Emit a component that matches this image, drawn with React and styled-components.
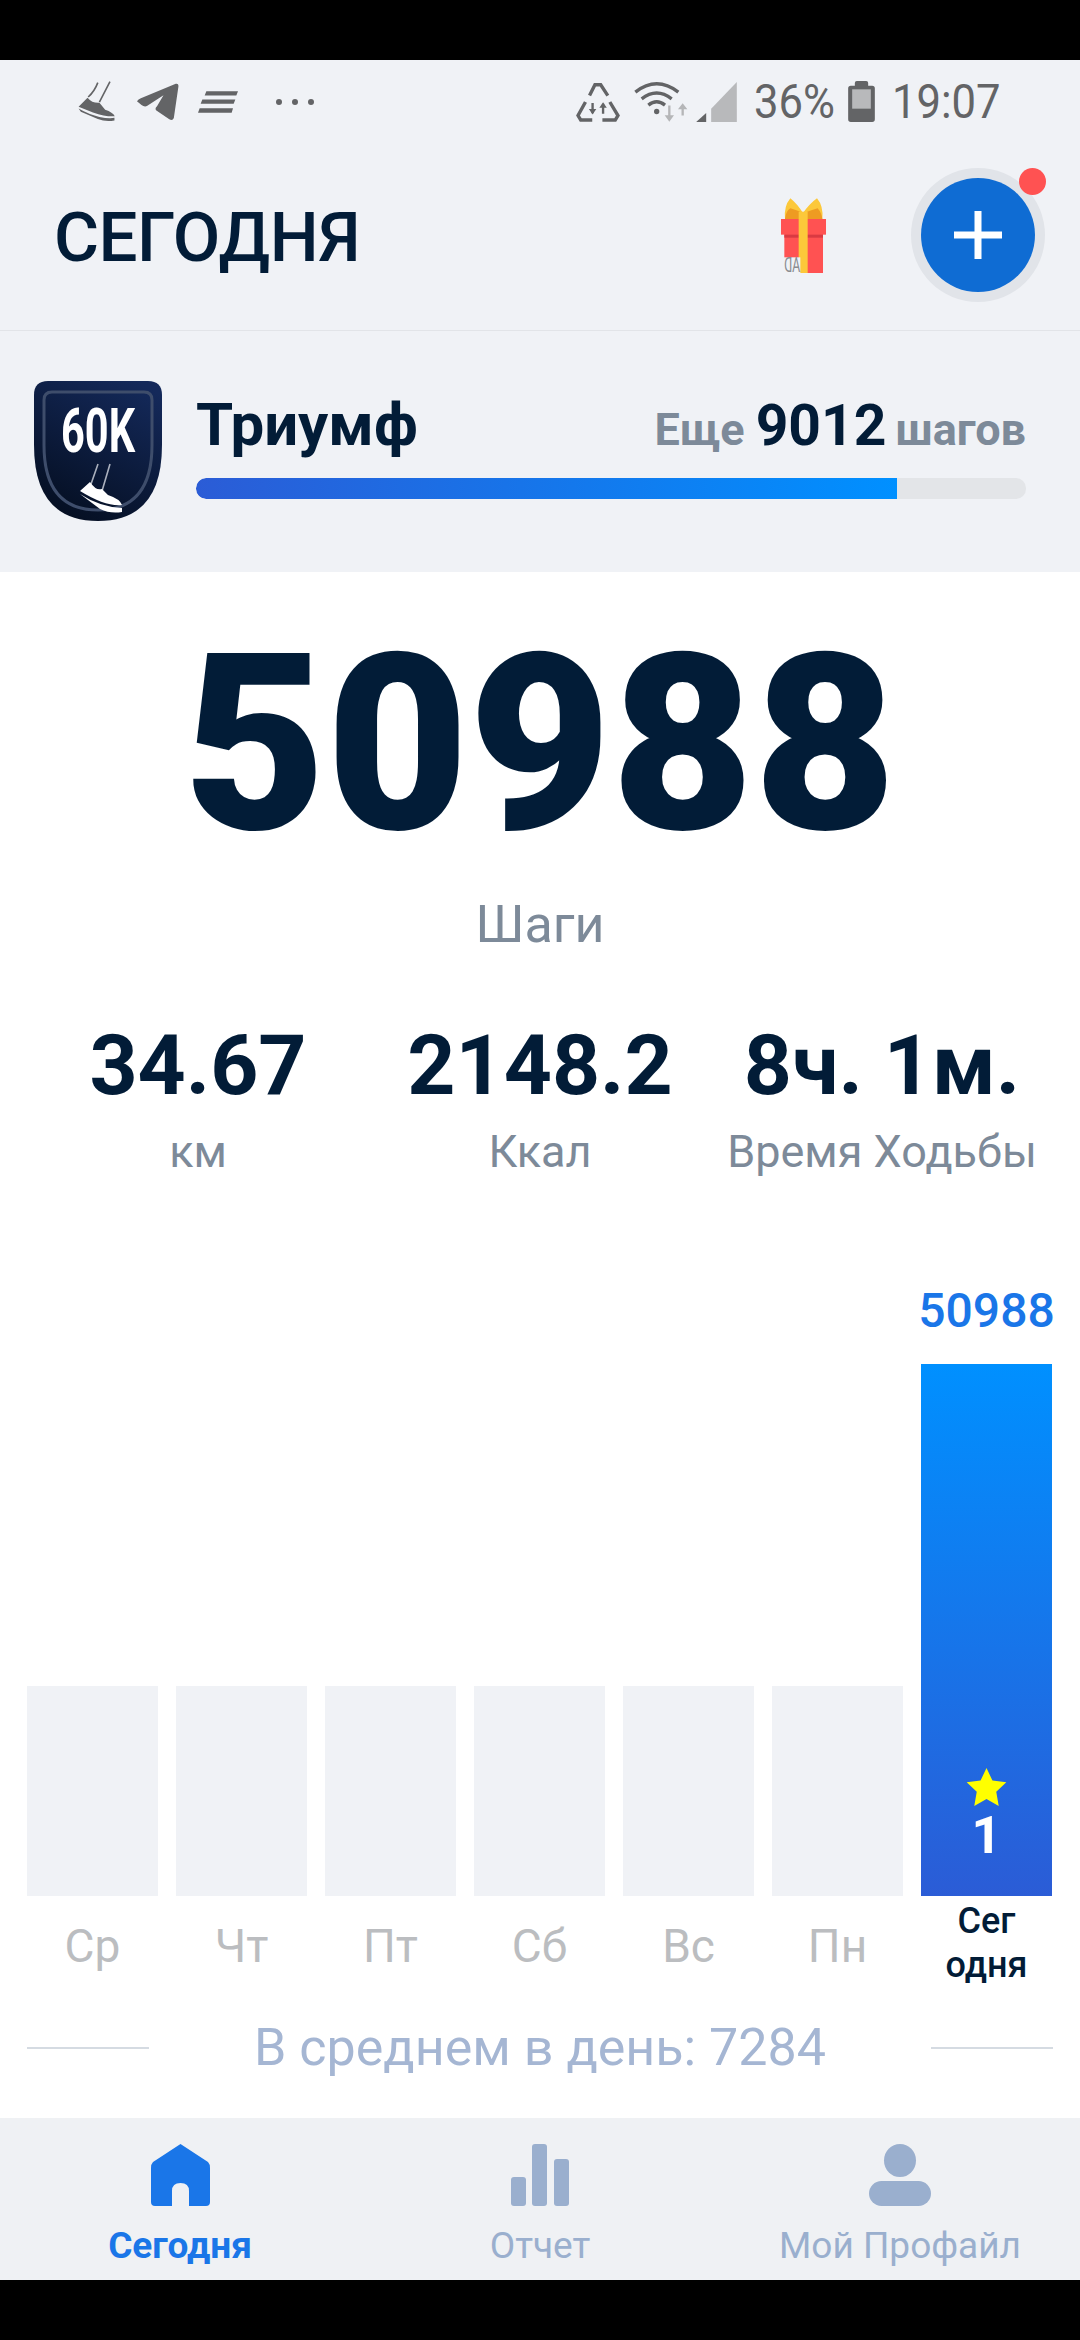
import React from "react";
import styled, { createGlobalStyle } from "styled-components";

const GlobalStyle = createGlobalStyle`
  html, body {
    margin: 0;
    padding: 0;
    background: #000;
    font-family: Roboto, "Noto Sans", sans-serif;
  }
`;

const dark = "#021c37";
const panel = "#f0f2f6";
const statusGrey = "#636466";

const Screen = styled.div`
  width: 1080px;
  height: 2340px;
  display: flex;
  flex-direction: column;
  background: #000;
  overflow: hidden;
`;

const BlackBar = styled.div`
  height: 60px;
  flex: none;
  background: #000;
`;

const StatusBar = styled.div`
  height: 80px;
  flex: none;
  display: flex;
  align-items: center;
  justify-content: space-between;
  padding: 3px 82px 0 78px;
  box-sizing: border-box;
  background: ${panel};
  color: ${statusGrey};
`;

const StatusGroup = styled.div`
  display: flex;
  align-items: center;
`;

const StatusIcon = styled.svg`
  display: block;
  flex: none;
  margin-left: ${(p) => p.$ml || 0}px;
`;

// the status bar font is narrower than Roboto, so it gets squeezed a bit
const StatusText = styled.span`
  display: block;
  width: ${(p) => p.$width}px;
  margin-left: ${(p) => p.$ml || 0}px;
  font-size: 49px;
  line-height: 60px;
  white-space: nowrap;
  transform: scaleX(0.89);
  transform-origin: left center;
`;

const Header = styled.header`
  height: 191px;
  flex: none;
  box-sizing: border-box;
  display: flex;
  align-items: center;
  padding: 0 35px 0 54px;
  background: ${panel};
  border-bottom: 1px solid #e2e4e8;
`;

const Title = styled.h1`
  flex: 1;
  margin: 6px 0 0;
  font-size: 69px;
  font-weight: 500;
  line-height: 80px;
  color: ${dark};
  letter-spacing: -0.5px;
`;

const GiftIcon = styled.svg`
  display: block;
  margin: 0 85px -5px 0;
`;

const AddRing = styled.div`
  position: relative;
  width: 134px;
  height: 134px;
  display: flex;
  align-items: center;
  justify-content: center;
  border-radius: 50%;
  background: #e1e4e9;
`;

const AddButton = styled.button`
  width: 114px;
  height: 114px;
  padding: 0;
  display: flex;
  align-items: center;
  justify-content: center;
  border: 0;
  border-radius: 50%;
  background: #0f6cd3;
`;

const RedDot = styled.span`
  position: absolute;
  top: 0;
  right: -1px;
  width: 27px;
  height: 27px;
  border-radius: 50%;
  background: #ff5252;
`;

const Goal = styled.section`
  height: 241px;
  flex: none;
  box-sizing: border-box;
  display: flex;
  padding: 50px 54px 0 34px;
  background: ${panel};
`;

const Badge = styled.svg`
  display: block;
  flex: none;
  margin-right: 34px;
`;

const GoalBody = styled.div`
  flex: 1;
`;

const GoalRow = styled.div`
  display: flex;
  align-items: baseline;
  justify-content: space-between;
  height: 70px;
  padding-top: 9px;
`;

const GoalName = styled.span`
  font-size: 60px;
  font-weight: 700;
  line-height: 70px;
  color: ${dark};
`;

const GoalNote = styled.span`
  font-size: 45px;
  font-weight: 700;
  color: #7d8a99;
`;

const GoalCount = styled.b`
  font-size: 57px;
  font-weight: 700;
  color: ${dark};
  margin: 0 9px 0 11px;
`;

const Track = styled.div`
  height: 21px;
  margin-top: 18px;
  border-radius: 10px;
  background: #e3e5e8;
  overflow: hidden;
`;

const Fill = styled.div`
  height: 100%;
  border-radius: 10px 0 0 10px;
  background: linear-gradient(90deg, #2b5cd6 0%, #0090ff 100%);
`;

const Main = styled.main`
  flex: 1;
  display: flex;
  flex-direction: column;
  background: #fff;
`;

const Steps = styled.div`
  margin-top: 48px;
  font-size: 246px;
  font-weight: 900;
  line-height: 250px;
  text-align: center;
  color: ${dark};
`;

const StepsLabel = styled.div`
  margin-top: 25px;
  font-size: 52px;
  line-height: 60px;
  text-align: center;
  color: #7d8a99;
`;

const Stats = styled.div`
  display: grid;
  grid-template-columns: repeat(3, 342px);
  justify-content: center;
  margin-top: 66px;
`;

const Stat = styled.div`
  text-align: center;
  white-space: nowrap;
`;

const StatValue = styled.div`
  font-size: 84px;
  font-weight: 700;
  line-height: 90px;
  color: ${dark};
`;

const StatLabel = styled.div`
  margin-top: 13px;
  font-size: 45px;
  line-height: 56px;
  color: #7d8a99;
`;

const Chart = styled.div`
  display: grid;
  grid-template-columns: repeat(7, 131px);
  column-gap: 18px;
  margin-top: 106px;
  padding-left: 27px;
`;

const Column = styled.div`
  display: flex;
  flex-direction: column;
`;

const BarSlot = styled.div`
  height: 610px;
  display: flex;
  flex-direction: column;
  justify-content: flex-end;
  align-items: stretch;
`;

const BarValue = styled.div`
  height: 50px;
  margin: 0 -4px 28px;
  font-size: 48px;
  font-weight: 500;
  line-height: 50px;
  text-align: center;
  color: #1a76e8;
`;

const Bar = styled.div`
  height: ${(p) => p.$height}px;
  display: flex;
  flex-direction: column;
  align-items: center;
  justify-content: flex-end;
  padding-bottom: ${(p) => (p.$active ? 36 : 0)}px;
  box-sizing: border-box;
  background: ${(p) =>
    p.$active ? "linear-gradient(180deg, #0090ff 0%, #2b5cd6 100%)" : panel};
`;

const Rank = styled.span`
  margin-top: 6px;
  font-size: 52px;
  font-weight: 700;
  line-height: 48px;
  color: #fff;
`;

const DayLabel = styled.div`
  height: 95px;
  box-sizing: border-box;
  padding-top: ${(p) => (p.$active ? 3 : 27)}px;
  font-size: ${(p) => (p.$active ? 36 : 46)}px;
  font-weight: ${(p) => (p.$active ? 500 : 400)};
  line-height: ${(p) => (p.$active ? 44 : 46)}px;
  text-align: center;
  color: ${(p) => (p.$active ? dark : "#bbbdc0")};
`;

const Average = styled.div`
  display: flex;
  align-items: center;
  justify-content: space-between;
  margin-top: 27px;
  padding: 0 27px;
`;

const AverageRule = styled.span`
  width: 122px;
  height: 2px;
  background: #d5dbe2;
`;

const AverageText = styled.span`
  font-size: 52px;
  line-height: 60px;
  color: #a5b6d3;
`;

const TabBar = styled.nav`
  height: 162px;
  flex: none;
  display: grid;
  grid-template-columns: repeat(3, 360px);
  background: #eff1f4;
`;

const Tab = styled.div`
  display: flex;
  flex-direction: column;
  align-items: center;
  padding-top: 26px;
  color: ${(p) => (p.$active ? "#1a76e8" : "#9aafce")};
`;

const TabLabel = styled.span`
  margin-top: 18px;
  font-size: 37px;
  font-weight: ${(p) => (p.$active ? 700 : 400)};
  line-height: 44px;
  white-space: nowrap;
`;

const ShoeStatus = () => (
  <StatusIcon width="38" height="41" viewBox="85 60 115 128">
    <path d="M145 65 Q135 92 115 110 M183 62 L150 126" stroke={statusGrey} strokeWidth="5" fill="none" />
    <path d="M85 140 L113 112 Q128 130 150 128 L168 150 Q192 158 198 170 Q170 172 130 158 Z" fill={statusGrey} />
    <path d="M85 146 Q120 166 150 172 Q178 178 197 175 L197 183 Q170 188 145 179 L92 156 Z" fill={statusGrey} />
  </StatusIcon>
);

const PlaneStatus = () => (
  <StatusIcon $ml={20} width="43" height="38" viewBox="255 70 133 117">
    <path
      d="M258 126 Q262 120 270 117 L378 72 Q388 70 386 82 L372 178 Q368 188 358 182 L318 155 Q312 148 320 142 L340 108 L290 140 Q282 145 272 138 Z"
      fill={statusGrey}
    />
  </StatusIcon>
);

const LinesStatus = () => (
  <StatusIcon $ml={19} width="40" height="22" viewBox="445 90 120 65">
    <path
      d="M470 90 H565 L560 103 H465 Z M458 115 H557 L552 128 H453 Z M450 141 H550 L546 155 H445 Z"
      fill={statusGrey}
    />
  </StatusIcon>
);

const DotsStatus = () => (
  <StatusIcon $ml={38} width="38" height="8" viewBox="0 0 38 8">
    <circle cx="3" cy="4" r="3" fill={statusGrey} />
    <circle cx="19" cy="4" r="3" fill={statusGrey} />
    <circle cx="35" cy="4" r="3" fill={statusGrey} />
  </StatusIcon>
);

const RecycleStatus = () => (
  <StatusIcon width="44" height="40" viewBox="52 66 130 118">
    <g fill="none" stroke={statusGrey} strokeWidth="10">
      <path d="M92 106 L108 74 H125 L146 106" />
      <path d="M80 125 L58 165 L66 178 H100" />
      <path d="M152 125 L176 165 L168 178 H130" />
      <path d="M101 128 V158 M132 160 V130" strokeWidth="7" />
    </g>
    <path d="M90 146 H112 L101 162 Z M121 142 H143 L132 126 Z" fill={statusGrey} />
  </StatusIcon>
);

const WifiStatus = () => (
  <StatusIcon $ml={14} width="55" height="42" viewBox="222 62 165 125">
    <g fill="none" stroke={statusGrey} strokeWidth="10">
      <path d="M226 95 Q290 45 355 95" />
      <path d="M245 115 Q290 80 335 115" />
      <path d="M265 134 Q290 114 315 134" />
    </g>
    <circle cx="290" cy="153" r="8" fill={statusGrey} />
    <path d="M328 135 V170 M368 165 V135" stroke="#b5b6b8" strokeWidth="7" fill="none" />
    <path d="M314 164 H342 L328 184 Z M354 146 H382 L368 128 Z" fill="#b5b6b8" />
  </StatusIcon>
);

const SignalStatus = () => (
  <StatusIcon $ml={7} width="41" height="40" viewBox="405 65 122 120">
    <path d="M405 185 L435 158 V185 Z" fill={statusGrey} />
    <path d="M450 185 V145 L527 65 V185 Z" fill="#b8b9bb" />
  </StatusIcon>
);

const BatteryStatus = () => (
  <StatusIcon $ml={16} width="27" height="41" viewBox="862 62 80 123">
    <path
      d="M882 76 V68 Q882 62 888 62 H916 Q922 62 922 68 V76 H934 Q942 76 942 84 V177 Q942 185 934 185 H870 Q862 185 862 177 V84 Q862 76 870 76 Z"
      fill={statusGrey}
    />
    <rect x="874" y="87" width="56" height="58" fill="#b8b9bb" />
  </StatusIcon>
);

const Gift = () => (
  <GiftIcon width="45" height="80" viewBox="60 105 135 240">
    <path d="M72 168 Q68 130 88 106 Q108 122 126 150 Q146 122 168 106 Q188 130 184 168 Z" fill="#fcc83a" />
    <path d="M72 168 Q74 145 88 136 Q108 142 128 150 Q150 142 170 136 Q182 150 184 168 Z" fill="#ee9b22" />
    <rect x="70" y="212" width="116" height="118" fill="#ff5252" />
    <rect x="60" y="168" width="135" height="47" fill="#ff5252" />
    <rect x="70" y="215" width="116" height="9" fill="#d93a42" />
    <rect x="113" y="146" width="27" height="184" fill="#fcc83a" />
    <rect x="64" y="283" width="54" height="47" fill="#f0f2f6" />
    <text
      transform="translate(118 328) scale(-0.62 1)"
      fontSize="60"
      fontFamily="Roboto, sans-serif"
      fill="#8a8c90"
    >
      AD
    </text>
  </GiftIcon>
);

const BadgeIcon = () => (
  <Badge width="128" height="140" viewBox="0 0 128 140">
    <defs>
      <linearGradient id="badgeBg" x1="0.8" y1="0" x2="0.3" y2="1">
        <stop offset="0" stopColor="#14295a" />
        <stop offset="1" stopColor="#050f22" />
      </linearGradient>
    </defs>
    <path d="M14 0 H114 Q128 0 128 14 V64 Q128 140 64 140 Q0 140 0 64 V14 Q0 0 14 0 Z" fill="url(#badgeBg)" />
    <path
      d="M18 11 H110 Q118 11 118 19 V64 Q118 129 64 129 Q10 129 10 64 V19 Q10 11 18 11 Z"
      fill="none"
      stroke="#3e4d6b"
      strokeWidth="3"
    />
    <text
      transform="translate(27 71) scale(0.67 1)"
      fontFamily="Roboto, sans-serif"
      fontWeight="700"
      fontSize="62"
      fill="#fff"
    >
      60K
    </text>
    <path d="M64 83 L56 106 M76 83 L68 110" stroke="#aab0bd" strokeWidth="1.6" fill="none" />
    <path d="M46 110 L56 101 Q62 110 68 108 L74 114 Q86 118 88 124 Q72 126 46 110 Z" fill="#fff" />
    <path d="M46 113 Q66 126 88 127 L88 131 Q76 133 66 128 Z" fill="#fff" />
  </Badge>
);

const Star = () => (
  <svg width="41" height="38" viewBox="0 0 24 23" style={{ display: "block" }}>
    <path d="M12 0 L15.6 7.6 L24 8.7 L17.9 14.4 L19.4 23 L12 18.8 L4.6 23 L6.1 14.4 L0 8.7 L8.4 7.6 Z" fill="#ffff00" />
  </svg>
);

const HomeIcon = () => (
  <svg width="59" height="62" viewBox="0 0 59 62" fill="currentColor" style={{ display: "block" }}>
    <path d="M29.5 0 L57 18 Q59 20 59 24 V58 Q59 62 55 62 H38 V47 Q38 39 29.5 39 Q21 39 21 47 V62 H4 Q0 62 0 58 V24 Q0 20 2 18 Z" />
  </svg>
);

const ReportIcon = () => (
  <svg width="58" height="62" viewBox="0 0 58 62" fill="currentColor" style={{ display: "block" }}>
    <rect x="0" y="33" width="15" height="29" rx="3" />
    <rect x="21" y="0" width="15" height="62" rx="3" />
    <rect x="43" y="15" width="15" height="47" rx="3" />
  </svg>
);

const ProfileIcon = () => (
  <svg width="62" height="62" viewBox="0 0 62 62" fill="currentColor" style={{ display: "block" }}>
    <ellipse cx="31" cy="16.5" rx="16" ry="16.5" />
    <rect x="0" y="37" width="62" height="25" rx="12.5" />
  </svg>
);

const days = ["Ср", "Чт", "Пт", "Сб", "Вс", "Пн"];

const stats = [
  { value: "34.67", label: "км" },
  { value: "2148.2", label: "Ккал" },
  { value: "8ч. 1м.", label: "Время Ходьбы" },
];

const App = () => {
  return (
    <Screen>
      <GlobalStyle />
      <BlackBar />
      <StatusBar>
        <StatusGroup>
          <ShoeStatus />
          <PlaneStatus />
          <LinesStatus />
          <DotsStatus />
        </StatusGroup>
        <StatusGroup>
          <RecycleStatus />
          <WifiStatus />
          <SignalStatus />
          <StatusText $ml={17} $width={78}>36%</StatusText>
          <BatteryStatus />
          <StatusText $ml={17} $width={106}>19:07</StatusText>
        </StatusGroup>
      </StatusBar>
      <Header>
        <Title>СЕГОДНЯ</Title>
        <Gift />
        <AddRing>
          <AddButton>
            <svg width="48" height="48" viewBox="0 0 48 48">
              <path d="M24 0 V48 M0 24 H48" stroke="#fff" strokeWidth="7" />
            </svg>
          </AddButton>
          <RedDot />
        </AddRing>
      </Header>
      <Goal>
        <BadgeIcon />
        <GoalBody>
          <GoalRow>
            <GoalName>Триумф</GoalName>
            <GoalNote>
              Еще<GoalCount>9012</GoalCount>шагов
            </GoalNote>
          </GoalRow>
          <Track>
            <Fill style={{ width: "84.5%" }} />
          </Track>
        </GoalBody>
      </Goal>
      <Main>
        <Steps>50988</Steps>
        <StepsLabel>Шаги</StepsLabel>
        <Stats>
          {stats.map((s) => (
            <Stat key={s.label}>
              <StatValue>{s.value}</StatValue>
              <StatLabel>{s.label}</StatLabel>
            </Stat>
          ))}
        </Stats>
        <Chart>
          {days.map((d) => (
            <Column key={d}>
              <BarSlot>
                <Bar $height={210} />
              </BarSlot>
              <DayLabel>{d}</DayLabel>
            </Column>
          ))}
          <Column>
            <BarSlot>
              <BarValue>50988</BarValue>
              <Bar $active $height={532}>
                <Star />
                <Rank>1</Rank>
              </Bar>
            </BarSlot>
            <DayLabel $active>
              Сег
              <br />
              одня
            </DayLabel>
          </Column>
        </Chart>
        <Average>
          <AverageRule />
          <AverageText>В среднем в день: 7284</AverageText>
          <AverageRule />
        </Average>
      </Main>
      <TabBar>
        <Tab $active>
          <HomeIcon />
          <TabLabel $active>Сегодня</TabLabel>
        </Tab>
        <Tab>
          <ReportIcon />
          <TabLabel>Отчет</TabLabel>
        </Tab>
        <Tab>
          <ProfileIcon />
          <TabLabel>Мой Профайл</TabLabel>
        </Tab>
      </TabBar>
      <BlackBar />
    </Screen>
  );
};

export default App;
